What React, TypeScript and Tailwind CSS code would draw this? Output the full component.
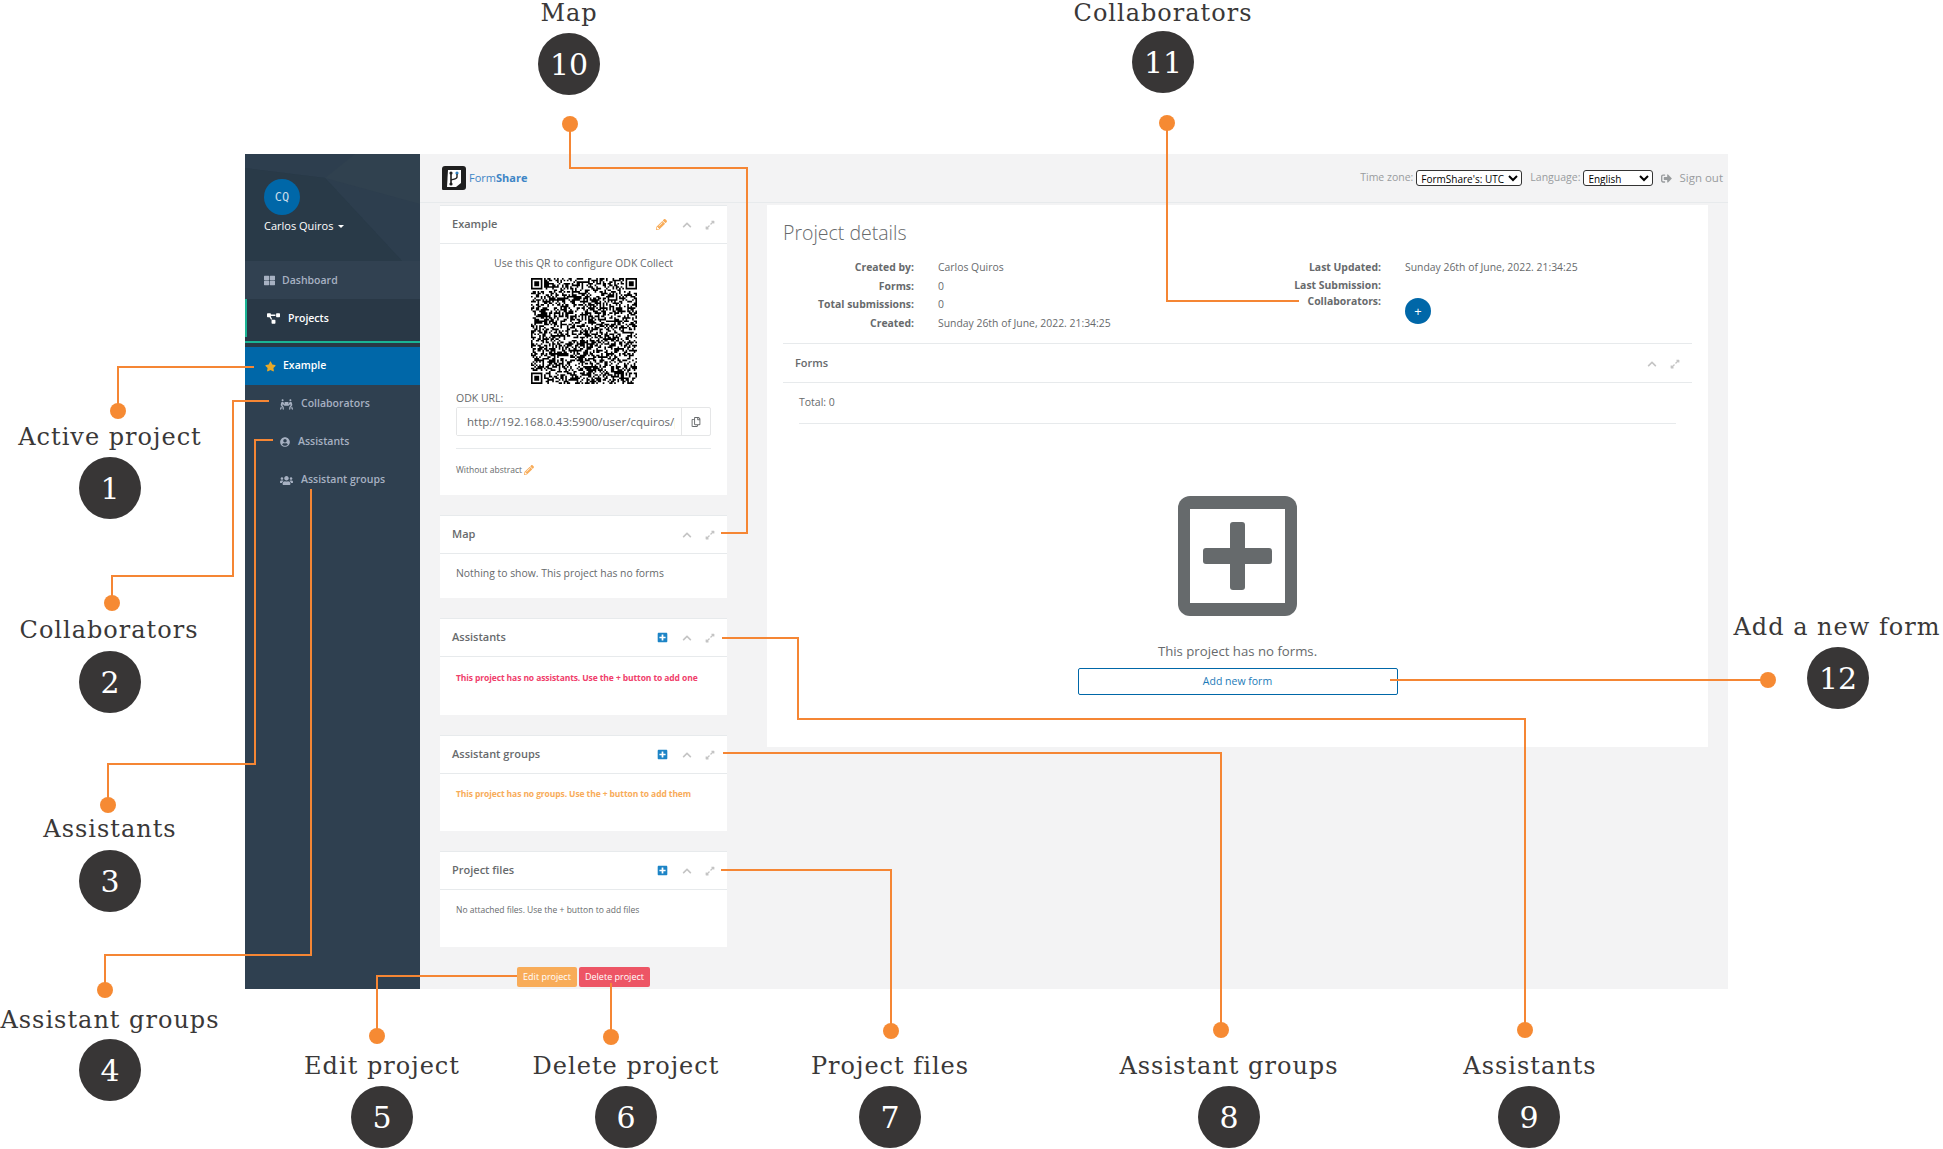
import { useMemo } from "react";
import {
  FaChevronUp,
  FaExpandAlt,
  FaPencilAlt,
  FaPeopleCarry,
  FaPlusSquare,
  FaProjectDiagram,
  FaRegCopy,
  FaSignOutAlt,
  FaStar,
  FaThLarge,
  FaUserCircle,
  FaUsers,
} from "react-icons/fa";

const CALLOUTS = [
  { n: "1", label: "Active project", lx: 110, ly: 437, cx: 110, cy: 488 },
  { n: "2", label: "Collaborators", lx: 109, ly: 630, cx: 110, cy: 682 },
  { n: "3", label: "Assistants", lx: 110, ly: 829, cx: 110, cy: 881 },
  { n: "4", label: "Assistant groups", lx: 110, ly: 1020, cx: 110, cy: 1070 },
  { n: "5", label: "Edit project", lx: 382, ly: 1066, cx: 382, cy: 1117 },
  { n: "6", label: "Delete project", lx: 626, ly: 1066, cx: 626, cy: 1117 },
  { n: "7", label: "Project files", lx: 890, ly: 1066, cx: 890, cy: 1117 },
  { n: "8", label: "Assistant groups", lx: 1229, ly: 1066, cx: 1229, cy: 1117 },
  { n: "9", label: "Assistants", lx: 1530, ly: 1066, cx: 1529, cy: 1117 },
  { n: "10", label: "Map", lx: 569, ly: 13, cx: 569, cy: 64 },
  { n: "11", label: "Collaborators", lx: 1163, ly: 13, cx: 1163, cy: 62 },
  { n: "12", label: "Add a new form", lx: 1837, ly: 627, cx: 1838, cy: 678 },
];

// each one starts at its dot
const LEADERS = [
  [[118, 411], [118, 367], [254, 367]],
  [[112, 603], [112, 576], [233, 576], [233, 401], [269, 401]],
  [[108, 805], [108, 764], [255, 764], [255, 440], [273, 440]],
  [[105, 990], [105, 955], [311, 955], [311, 489]],
  [[377, 1036], [377, 976], [517, 976]],
  [[611, 1037], [611, 983]],
  [[891, 1031], [891, 870], [721, 870]],
  [[1221, 1030], [1221, 753], [723, 753]],
  [[1525, 1030], [1525, 719], [798, 719], [798, 638], [722, 638]],
  [[570, 124], [570, 168], [747, 168], [747, 533], [721, 533]],
  [[1167, 123], [1167, 301], [1299, 301]],
  [[1768, 680], [1390, 680]],
];

function QrCode() {
  const size = 65;
  const path = useMemo(() => {
    let seed = 20220626;
    const rnd = () => {
      seed = (seed * 1664525 + 1013904223) >>> 0;
      return seed / 4294967296;
    };
    const inFinder = (x: number, y: number, fx: number, fy: number) =>
      x >= fx - 1 && x <= fx + 7 && y >= fy - 1 && y <= fy + 7;
    const finders = [
      [0, 0],
      [size - 7, 0],
      [0, size - 7],
    ];
    let d = "";
    for (let y = 0; y < size; y++) {
      for (let x = 0; x < size; x++) {
        let on = false;
        const f = finders.find(([fx, fy]) => inFinder(x, y, fx, fy));
        if (f) {
          const dx = x - f[0];
          const dy = y - f[1];
          const edge = dx === 0 || dx === 6 || dy === 0 || dy === 6;
          const core = dx >= 2 && dx <= 4 && dy >= 2 && dy <= 4;
          const inside = dx >= 0 && dx <= 6 && dy >= 0 && dy <= 6;
          on = inside && (edge || core);
        } else {
          on = rnd() > 0.5;
        }
        if (on) d += `M${x} ${y}h1v1h-1z`;
      }
    }
    return d;
  }, []);
  return (
    <svg viewBox={`0 0 ${size} ${size}`} className="w-[106px] h-[106px] mx-auto mt-[7px]">
      <path d={path} fill="#000" />
    </svg>
  );
}

function Logo() {
  return (
    <svg viewBox="0 0 24 24" className="w-6 h-6">
      <path d="M3 0H21C23 0 24 1 24 3V21C24 23 23 24 21 24H1C0 24 0 23 0 22V3C0 1 1 0 3 0Z" fill="#1f1f1f" />
      <path d="M6 4H19V17L14 21H5Z" fill="#fff" />
      <path d="M9 6V19" stroke="#1f1f1f" strokeWidth="1.6" />
      <circle cx="9" cy="7" r="1.6" fill="#1f1f1f" />
      <circle cx="9" cy="18" r="1.6" fill="#1f1f1f" />
      <circle cx="15" cy="7" r="1.6" fill="#2b7fc0" />
      <path d="M15 8V11C15 13 12 13 9 14" stroke="#1f1f1f" strokeWidth="1.4" fill="none" />
    </svg>
  );
}

function PanelTools({ edit, add }: { edit?: boolean; add?: boolean }) {
  return (
    <div className="flex items-center">
      {edit && <FaPencilAlt className="text-[#f8ac59] text-[11px] mr-[15px]" />}
      {add && <FaPlusSquare className="text-[#1c84c6] text-[11px] mr-[14px]" />}
      <FaChevronUp className="text-[#c4c4c4] text-[10px]" />
      <FaExpandAlt className="text-[#c4c4c4] text-[10px] ml-[13px]" />
    </div>
  );
}

function Panel({
  title,
  height,
  edit,
  add,
  children,
}: {
  title: string;
  height: string;
  edit?: boolean;
  add?: boolean;
  children: React.ReactNode;
}) {
  return (
    <section className={`bg-white border-t border-[#e7eaec] ${height}`}>
      <div className="h-[38px] border-b border-[#e7eaec] pl-3 pr-[12px] flex items-center justify-between">
        <h5 className="text-[11px] font-semibold text-[#676a6c]">{title}</h5>
        <PanelTools edit={edit} add={add} />
      </div>
      <div className="px-4">{children}</div>
    </section>
  );
}

function NavRow({ icon, label, className }: { icon: React.ReactNode; label: string; className: string }) {
  return (
    <div className={`h-[38px] flex items-center text-[10.5px] text-[#a7b1c2] font-semibold ${className}`}>
      {icon}
      <span>{label}</span>
    </div>
  );
}

function Sidebar() {
  return (
    <aside className="w-[175px] h-[835px] bg-[#2f4050] shrink-0">
      <div className="relative h-[107px] bg-[#2a3b4a] overflow-hidden">
        <svg viewBox="0 0 175 107" className="absolute inset-0 w-full h-full">
          <polygon points="0,0 175,0 175,107 157,107 80,24 0,14" fill="#2d3e4e" />
          <polygon points="80,24 110,0 175,0 175,50" fill="#30414f" />
          <polygon points="0,14 80,24 157,107 0,107" fill="#293a48" />
        </svg>
        <div className="relative pl-[19px] pt-[25px]">
          <div className="w-9 h-9 rounded-full bg-[#0067a8] text-[#c9dcea] flex items-center justify-center text-[12px] font-['DejaVu_Sans_Mono',monospace]">
            CQ
          </div>
          <div className="mt-[3px] text-[11px] text-white flex items-center">
            Carlos Quiros
            <span className="ml-[5px] mt-[1px] border-x-[3px] border-x-transparent border-t-[3px] border-t-white" />
          </div>
        </div>
      </div>
      <NavRow
        className="bg-[#314151] pl-[19px] pt-[1px]"
        icon={<FaThLarge className="text-[11px] mr-[7px] text-[#a7b1c2]" />}
        label="Dashboard"
      />
      <div className="h-[48px] bg-[#293846]">
        <div className="h-[38px] pt-[1px] border-l-2 border-[#1ab394] pl-5 flex items-center text-[10.5px] font-semibold text-white">
          <FaProjectDiagram className="text-[13px] mr-[8px]" />
          Projects
        </div>
        <div className="h-[2px] mt-[4px] bg-[#1ab394]" />
      </div>
      <NavRow
        className="bg-[#0067a8] !text-white pl-5"
        icon={<FaStar className="text-[11px] mr-[7px] text-[#e8a928]" />}
        label="Example"
      />
      <NavRow
        className="pl-[35px]"
        icon={<FaPeopleCarry className="text-[13px] mr-2 text-[#a7b1c2]" />}
        label="Collaborators"
      />
      <NavRow
        className="pl-[35px]"
        icon={<FaUserCircle className="text-[10px] mr-2 text-[#a7b1c2]" />}
        label="Assistants"
      />
      <NavRow
        className="pl-[35px]"
        icon={<FaUsers className="text-[13px] mr-2 text-[#a7b1c2]" />}
        label="Assistant groups"
      />
    </aside>
  );
}

function TopBar() {
  return (
    <header className="h-[49px] border-b border-[#e7eaec] flex items-center justify-between pl-[22px] pr-[5px] text-[10.5px] text-[#999c9e]">
      <div className="flex items-center">
        <Logo />
        <span className="ml-[3px] text-[11px] text-[#3d85c6]">
          Form<b className="font-bold">Share</b>
        </span>
      </div>
      <div className="flex items-center">
        <span>Time zone:</span>
        <select className="ml-[3px] w-[106px] h-4 p-0 leading-none bg-white border border-[#333] rounded-[3px] text-black text-[10px]">
          <option>FormShare's: UTC</option>
        </select>
        <span className="ml-2">Language:</span>
        <select className="ml-[3px] w-[70px] h-4 p-0 leading-none bg-white border border-[#333] rounded-[3px] text-black text-[10px]">
          <option>English</option>
        </select>
        <FaSignOutAlt className="ml-2 text-[11px]" />
        <span className="ml-[7px] text-[11.5px]">Sign out</span>
      </div>
    </header>
  );
}

function LeftColumn() {
  return (
    <div className="w-[287px] shrink-0 flex flex-col gap-[20px]">
      <Panel title="Example" height="h-[290px]" edit>
        <p className="text-[10.5px] text-center text-[#676a6c] mt-[11px] leading-[16px]">
          Use this QR to configure ODK Collect
        </p>
        <QrCode />
        <label className="block text-[10.5px] text-[#676a6c] mt-[6px] leading-4">ODK URL:</label>
        <div className="flex h-[29px] mt-[1px] border border-[#e5e6e7] rounded-[2px]">
          <input
            readOnly
            value="http://192.168.0.43:5900/user/cquiros/project/example"
            className="w-[225px] pl-[10px] pr-[6px] border-r border-[#e5e6e7] text-[11.5px] text-[#676a6c] outline-none bg-white"
          />
          <div className="flex-1 flex items-center justify-center">
            <FaRegCopy className="text-[10px] text-[#676a6c]" />
          </div>
        </div>
        <div className="border-t border-[#e7eaec] mt-3" />
        <p className="text-[8.5px] text-[#676a6c] mt-[15px] flex items-center">
          Without abstract
          <FaPencilAlt className="text-[#f8ac59] text-[10px] ml-[2px]" />
        </p>
      </Panel>
      <Panel title="Map" height="h-[83px]">
        <p className="text-[10.4px] text-[#676a6c] mt-[12px]">Nothing to show. This project has no forms</p>
      </Panel>
      <Panel title="Assistants" height="h-[97px]" add>
        <p className="text-[8.5px] font-bold text-[#f0406b] mt-[15px] tracking-[-0.1px] whitespace-nowrap">
          This project has no assistants. Use the + button to add one
        </p>
      </Panel>
      <Panel title="Assistant groups" height="h-[96px]" add>
        <p className="text-[8.5px] font-bold text-[#f8ac59] mt-[14px] tracking-[-0.1px] whitespace-nowrap">
          This project has no groups. Use the + button to add them
        </p>
      </Panel>
      <Panel title="Project files" height="h-[96px]" add>
        <p className="text-[8.5px] text-[#676a6c] mt-[14px]">No attached files. Use the + button to add files</p>
      </Panel>
      <div className="flex justify-center gap-[2px]">
        <button className="w-[60px] h-5 bg-[#f8ac59] text-white text-[9px] rounded-[2px]">Edit project</button>
        <button className="w-[71px] h-5 bg-[#ed5565] text-white text-[9px] rounded-[2px]">Delete project</button>
      </div>
    </div>
  );
}

function Detail({ label, value, labelWidth, height }: { label: string; value?: string; labelWidth: string; height: string }) {
  return (
    <div className={`flex items-center text-[10.4px] text-[#676a6c] ${height}`}>
      <span className={`${labelWidth} shrink-0 text-right font-bold`}>{label}</span>
      <span className="ml-6 whitespace-nowrap">{value}</span>
    </div>
  );
}

function ProjectDetails() {
  return (
    <div className="w-[941px] h-[542px] bg-white px-4 ml-10 shrink-0">
      <h2 className="pt-[16px] h-[53px] text-[19.5px] leading-6 font-light text-[#676a6c]">Project details</h2>
      <div className="flex h-[85px] pt-[1px]">
        <div className="w-[451px]">
          <Detail labelWidth="w-[131px]" height="h-[18.4px]" label="Created by:" value="Carlos Quiros" />
          <Detail labelWidth="w-[131px]" height="h-[18.4px]" label="Forms:" value="0" />
          <Detail labelWidth="w-[131px]" height="h-[18.4px]" label="Total submissions:" value="0" />
          <Detail labelWidth="w-[131px]" height="h-[18.4px]" label="Created:" value="Sunday 26th of June, 2022. 21:34:25" />
        </div>
        <div>
          <Detail labelWidth="w-[147px]" height="h-[18px]" label="Last Updated:" value="Sunday 26th of June, 2022. 21:34:25" />
          <Detail labelWidth="w-[147px]" height="h-[18px]" label="Last Submission:" />
          <div className="flex -mt-[1px]">
            <span className="w-[147px] text-right text-[10.4px] font-bold text-[#676a6c] leading-[14px]">Collaborators:</span>
            <span className="ml-6 mt-[4px] w-[26px] h-[26px] rounded-full bg-[#0067a8] text-white flex items-center justify-center text-[13px] leading-none">
              +
            </span>
          </div>
        </div>
      </div>
      <div className="h-[40px] pt-[1px] border-y border-[#e7eaec] pl-3 pr-[12px] flex items-center justify-between">
        <h5 className="text-[11px] font-semibold text-[#676a6c]">Forms</h5>
        <PanelTools />
      </div>
      <div className="mx-4 h-[41px] pb-[1px] border-b border-[#e7eaec] flex items-center text-[10.5px] text-[#676a6c]">Total: 0</div>
      <div className="flex flex-col items-center mt-[72px]">
        <svg viewBox="0 0 119 120" className="w-[119px] h-[120px]">
          <rect width="119" height="120" rx="12" fill="#666a6c" />
          <rect x="12" y="13" width="95" height="94" fill="#fff" />
          <rect x="52" y="26" width="15" height="68" rx="3" fill="#666a6c" />
          <rect x="25" y="52" width="69" height="16" rx="3" fill="#666a6c" />
        </svg>
        <p className="mt-[26px] text-[13.2px] font-medium leading-[18px] text-[#676a6c]">This project has no forms.</p>
        <button className="mt-[8px] w-[320px] h-[27px] border border-[#0067a8] rounded-[2px] text-[10.5px] text-[#1c7ab8]">
          Add new form
        </button>
      </div>
    </div>
  );
}

function Callouts() {
  return (
    <>
      <svg viewBox="0 0 1943 1149" className="absolute inset-0 w-[1943px] h-[1149px]">
        {LEADERS.map((pts, i) => (
          <g key={i}>
            <polyline points={pts.map((p) => p.join(",")).join(" ")} fill="none" stroke="#f58634" strokeWidth="2" />
            <circle cx={pts[0][0]} cy={pts[0][1]} r="8" fill="#f68a33" />
          </g>
        ))}
      </svg>
      {CALLOUTS.map((c) => (
        <div key={c.n}>
          <span className="absolute -translate-x-1/2 -translate-y-1/2 whitespace-nowrap font-['DejaVu_Serif',serif] text-[24px] leading-none tracking-[1px] text-[#3a3838]" style={{ left: c.lx, top: c.ly }}>
            {c.label}
          </span>
          <span className="absolute -translate-x-1/2 -translate-y-1/2 w-[62px] h-[62px] rounded-full bg-[#383636] text-white flex items-center justify-center font-['DejaVu_Serif',serif] text-[30px]" style={{ left: c.cx, top: c.cy }}>
            {c.n}
          </span>
        </div>
      ))}
    </>
  );
}

export default function App() {
  return (
    <div className="relative w-[1943px] h-[1149px] bg-white overflow-hidden font-['Open_Sans',sans-serif]">
      <div className="pt-[154px] pl-[245px]">
        <div className="flex w-[1483px] h-[835px] bg-[#f3f3f4]">
          <Sidebar />
          <main className="flex-1">
            <TopBar />
            <div className="flex pl-5 pt-[2px]">
              <LeftColumn />
              <ProjectDetails />
            </div>
          </main>
        </div>
      </div>
      <Callouts />
    </div>
  );
}
